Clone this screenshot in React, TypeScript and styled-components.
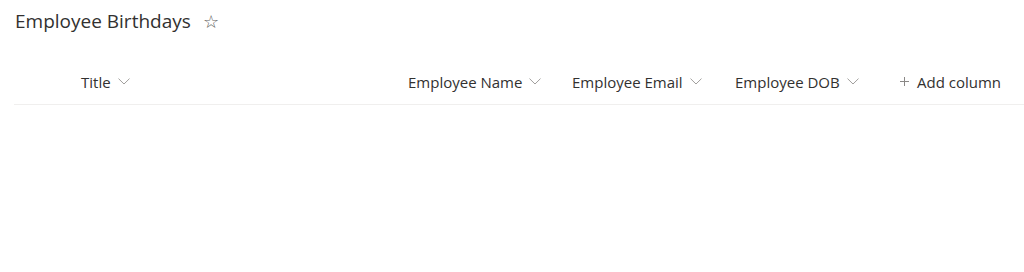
import React from 'react';
import styled, { createGlobalStyle } from 'styled-components';

const GlobalStyle = createGlobalStyle`
  body {
    margin: 0;
    background: #ffffff;
    font-family: "Open Sans", "Noto Sans", Arial, sans-serif;
    color: #323130;
  }
`;

const Page = styled.div`
  width: 1024px;
  height: 272px;
  padding-left: 14px;
  box-sizing: border-box;
  overflow: hidden;
`;

const TitleBar = styled.div`
  display: flex;
  align-items: center;
  height: 42px;
  padding-left: 1px;
`;

const ListTitle = styled.h1`
  margin: 0;
  font-size: 19px;
  font-weight: 500;
  color: #323130;
`;

const Star = styled.span`
  margin-left: 12px;
  font-size: 18px;
  color: #605e5c;
  line-height: 1;
`;

const HeaderRow = styled.div`
  display: grid;
  grid-template-columns: 67px 327px 164px 163px 168px 1fr;
  align-items: center;
  height: 62px;
  border-bottom: 1px solid #f0efee;
`;

const Cell = styled.div`
  display: flex;
  align-items: center;
  padding-top: 17px;
  font-size: 15px;
  white-space: nowrap;
  color: #323130;
`;

const Chevron = styled.svg`
  margin-left: 7px;
  width: 12px;
  height: 7px;
`;

const PlusIcon = styled.svg`
  width: 9px;
  height: 9px;
  margin-left: -3px;
  margin-right: 8px;
`;

const columns = ['Title', 'Employee Name', 'Employee Email', 'Employee DOB'];

const Down = () => (
  <Chevron viewBox="0 0 12 7" fill="none">
    <path d="M0.5 0.6 L6 6 L11.5 0.6" stroke="#a19f9d" strokeWidth="1" />
  </Chevron>
);

const Plus = () => (
  <PlusIcon viewBox="0 0 9 9" fill="none">
    <path d="M4.5 0 V9 M0 4.5 H9" stroke="#8a8886" strokeWidth="1" />
  </PlusIcon>
);

export default function App() {
  return (
    <Page>
      <GlobalStyle />
      <TitleBar>
        <ListTitle>Employee Birthdays</ListTitle>
        <Star>☆</Star>
      </TitleBar>
      <HeaderRow>
        <Cell />
        {columns.map(c => (
          <Cell key={c}>
            {c}
            <Down />
          </Cell>
        ))}
        <Cell>
          <Plus />
          Add column
        </Cell>
      </HeaderRow>
    </Page>
  );
}
